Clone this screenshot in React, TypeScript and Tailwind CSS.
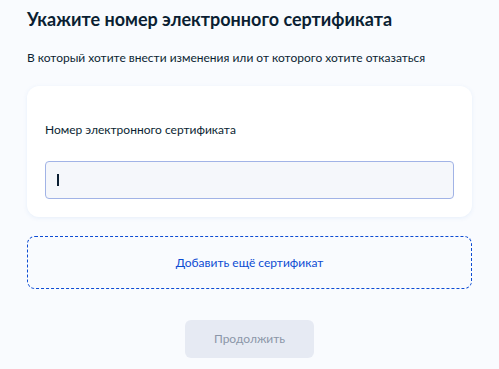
export default function App() {
  return (
    <div
      className="min-h-[369px] w-[499px] bg-[#f9fbfe] px-[27px] pt-[7px] text-[#0b1f33]"
      style={{ fontFamily: "Lato, 'Noto Sans', sans-serif" }}
    >
      <h1 className="text-[18px] font-bold leading-[24px]">
        Укажите номер электронного сертификата
      </h1>
      <p className="mt-[19px] text-[12px] leading-[16px]">
        В который хотите внести изменения или от которого хотите отказаться
      </p>
      <div className="mt-[20px] h-[131px] rounded-[12px] bg-white px-[18px] pt-[36px] shadow-[0_1px_4px_rgba(102,150,221,0.12)]">
        <div className="text-[12px] leading-[16px]">Номер электронного сертификата</div>
        <div className="mt-[23px] flex h-[38px] items-center rounded-[4px] border border-[#a1b3e6] bg-[#f5f7fb] px-[11px]">
          <div className="h-[12px] w-[1.5px] bg-[#0b1f33]" />
        </div>
      </div>
      <div className="mt-[19px] flex h-[53px] items-center justify-center rounded-[8px] border border-dashed border-[#0d4cd3] text-[12px] text-[#0d4cd3]">
        Добавить ещё сертификат
      </div>
      <div className="mt-[31px] flex justify-center">
        <div className="flex h-[38px] w-[129px] items-center justify-center rounded-[6px] bg-[#e6eaf3] text-[12px] text-[#8b96a8]">
          Продолжить
        </div>
      </div>
    </div>
  );
}
